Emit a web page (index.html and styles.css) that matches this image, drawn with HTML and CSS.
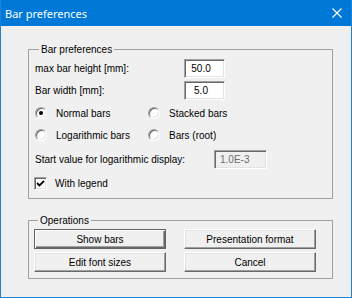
FILE: index.html
```html
<!DOCTYPE html>
<html lang="en">
<head>
    <meta charset="UTF-8">
    <meta name="viewport" content="width=device-width, initial-scale=1.0">
    <link rel="stylesheet" href="styles.css">
</head>
<body>
    <div class="window">
        <div class="titlebar">
            <span class="title">Bar preferences</span>
            <svg class="close" width="10" height="10" viewBox="0 0 10 10">
                <path d="M0.5 0.5 L9.5 9.5 M9.5 0.5 L0.5 9.5" stroke="#fff" stroke-width="1.1" fill="none"/>
            </svg>
        </div>

        <div class="content">
            <fieldset class="group prefs">
                <legend>Bar preferences</legend>

                <div class="row field">
                    <span class="label">max bar height [mm]:</span>
                    <span class="edit num">50.0</span>
                </div>
                <div class="row field">
                    <span class="label">Bar width [mm]:</span>
                    <span class="edit num">5.0</span>
                </div>

                <div class="row radios first">
                    <span class="option"><span class="radio checked"></span>Normal bars</span>
                    <span class="option"><span class="radio"></span>Stacked bars</span>
                </div>
                <div class="row radios">
                    <span class="option"><span class="radio"></span>Logarithmic bars</span>
                    <span class="option"><span class="radio"></span>Bars (root)</span>
                </div>

                <div class="row start">
                    <span class="label wide">Start value for logarithmic display:</span>
                    <span class="edit disabled">1.0E-3</span>
                </div>

                <div class="row check">
                    <span class="checkbox">
                        <svg width="9" height="9" viewBox="0 0 9 9">
                            <path d="M1 4 L3.5 6.5 L8 2" stroke="#000" stroke-width="1.8" fill="none"/>
                        </svg>
                    </span>
                    With legend
                </div>
            </fieldset>

            <fieldset class="group ops">
                <legend>Operations</legend>
                <div class="buttons">
                    <button class="btn default">Show bars</button>
                    <button class="btn">Presentation format</button>
                    <button class="btn">Edit font sizes</button>
                    <button class="btn">Cancel</button>
                </div>
            </fieldset>
        </div>
    </div>
</body>
</html>
```

FILE: styles.css
```css
:root {
    --face: #f0f0f0;
    --title: #0078d7;
    --frame: #1883d7;
    --shadow: #a0a0a0;
    --dark: #696969;
    --light: #e3e3e3;
}

* {
    margin: 0;
    padding: 0;
    box-sizing: border-box;
}

body {
    font-family: "Liberation Sans", Arial, sans-serif;
    font-size: 10px;
    color: #000;
    background: var(--face);
}

.window {
    width: 352px;
    height: 298px;
    background: var(--face);
    border: 1px solid var(--frame);
    border-top: 0;
}

.titlebar {
    height: 26px;
    background: var(--title);
    color: #fff;
    display: flex;
    align-items: center;
    justify-content: space-between;
    padding: 0 9px 0 4px;
}

.title {
    font-family: "Noto Sans", sans-serif;
    font-size: 11px;
}

.close {
    display: block;
}

.content {
    padding: 17px 18px 0 27px;
}

.group {
    border: 1px solid var(--shadow);
    padding: 3px 0 6px 6px;
}

.group legend {
    margin-left: 4px;
    padding: 0 2px;
    line-height: 13px;
}

.row {
    display: flex;
    align-items: center;
}

.field {
    height: 19px;
}

.field + .field {
    margin-top: 3px;
}

.label {
    width: 149px;
}

.label.wide {
    width: 179px;
}

.edit {
    height: 19px;
    width: 41px;
    background: #fff;
    border: 1px solid;
    border-color: var(--shadow) #fff #fff var(--shadow);
    box-shadow: inset 1px 1px 0 var(--dark), inset -1px -1px 0 var(--light);
    display: flex;
    align-items: center;
}

.edit.num {
    justify-content: center;
    padding-right: 7px;
}

.edit.disabled {
    width: 53px;
    background: var(--face);
    color: #6d6d6d;
    padding-left: 5px;
}

.radios {
    height: 22px;
}

.radios.first {
    margin-top: 2px;
}

.option {
    display: flex;
    align-items: center;
    width: 113px;
}

.radio {
    width: 12px;
    height: 12px;
    border-radius: 50%;
    background: #fff;
    border: 1px solid;
    border-color: var(--shadow) #fff #fff var(--shadow);
    box-shadow: inset 1px 1px 0 var(--dark), inset -1px -1px 0 var(--light);
    margin-right: 9px;
    position: relative;
}

.radio.checked::after {
    content: '';
    position: absolute;
    left: 3px;
    top: 3px;
    width: 4px;
    height: 4px;
    border-radius: 50%;
    background: #000;
}

.start {
    margin-top: 4px;
    height: 19px;
}

.check {
    margin-top: 5px;
    height: 18px;
}

.checkbox {
    width: 13px;
    height: 13px;
    margin-left: -1px;
    margin-right: 8px;
    background: #fff;
    border: 1px solid;
    border-color: var(--shadow) #fff #fff var(--shadow);
    box-shadow: inset 1px 1px 0 var(--dark), inset -1px -1px 0 var(--light);
    display: flex;
    align-items: center;
    justify-content: center;
}

.checkbox svg {
    display: block;
}

.prefs {
    margin-bottom: 15px;
}

.ops {
    padding: 2px 0 6px 5px;
}

.buttons {
    display: grid;
    grid-template-columns: 132px 132px;
    gap: 3px 18px;
}

.btn {
    height: 20px;
    font: inherit;
    color: #000;
    background: var(--face);
    border: 1px solid;
    border-color: #fff var(--dark) var(--dark) #fff;
    box-shadow: inset -1px -1px 0 var(--shadow), inset 1px 1px 0 var(--light);
}

.btn.default {
    border-color: #646464;
    box-shadow: inset 1px 1px 0 #fff, inset -1px -1px 0 var(--dark), inset -2px -2px 0 var(--shadow);
}
```
